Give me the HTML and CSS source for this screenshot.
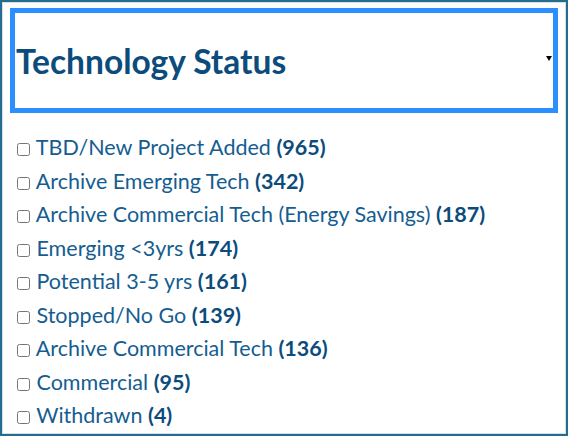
FILE: index.html
```
<!DOCTYPE html>
<html lang="en">
<head>
    <meta charset="UTF-8">
    <meta name="viewport" content="width=device-width, initial-scale=1.0">
    <title>Technology Status</title>
    <link rel="stylesheet" href="styles.css">
</head>
<body>
    <div class="filter-box">
        <div class="select-box">
            <h2 class="select-title">Technology Status</h2>
            <span class="select-arrow"></span>
        </div>

        <ul class="status-list">
            <li><label><input type="checkbox"> TBD/New Project Added <b>(965)</b></label></li>
            <li><label><input type="checkbox"> Archive Emerging Tech <b>(342)</b></label></li>
            <li><label><input type="checkbox"> Archive Commercial Tech (Energy Savings) <b>(187)</b></label></li>
            <li><label><input type="checkbox"> Emerging &lt;3yrs <b>(174)</b></label></li>
            <li><label><input type="checkbox"> Potential 3-5 yrs <b>(161)</b></label></li>
            <li><label><input type="checkbox"> Stopped/No Go <b>(139)</b></label></li>
            <li><label><input type="checkbox"> Archive Commercial Tech <b>(136)</b></label></li>
            <li><label><input type="checkbox"> Commercial <b>(95)</b></label></li>
            <li><label><input type="checkbox"> Withdrawn <b>(4)</b></label></li>
        </ul>
    </div>
</body>
</html>
```

FILE: styles.css
```
body {
    margin: 0;
    background: #fff;
    font-family: Lato, "Open Sans", sans-serif;
}

.filter-box {
    box-sizing: border-box;
    width: 568px;
    height: 436px;
    border: 2px solid #266c8f;
    box-shadow: inset 0 0 0 1px #d3e0e7;
    padding: 6px 8px;
}

.select-box {
    box-sizing: border-box;
    height: 105px;
    width: 548px;
    border: 5px solid #2b8fff;
    padding: 0 1px 0 1px;
    display: flex;
    align-items: center;
    justify-content: space-between;
}

.select-title {
    margin: 0;
    font-size: 33.5px;
    font-weight: 700;
    color: #0c4c7c;
}

.select-arrow {
    width: 0;
    height: 0;
    border-left: 3.5px solid transparent;
    border-right: 3.5px solid transparent;
    border-top: 5px solid #000;
    margin-bottom: 4px;
}

.status-list {
    list-style: none;
    margin: 18px 0 0;
    padding: 0 0 0 7px;
}

.status-list li {
    line-height: 33.5px;
    font-size: 21.5px;
    color: #155d91;
}

.status-list input {
    width: 13px;
    height: 13px;
    margin: 0 1px 0 0;
    vertical-align: -1px;
}

.status-list b {
    color: #0c4c7c;
}
```
